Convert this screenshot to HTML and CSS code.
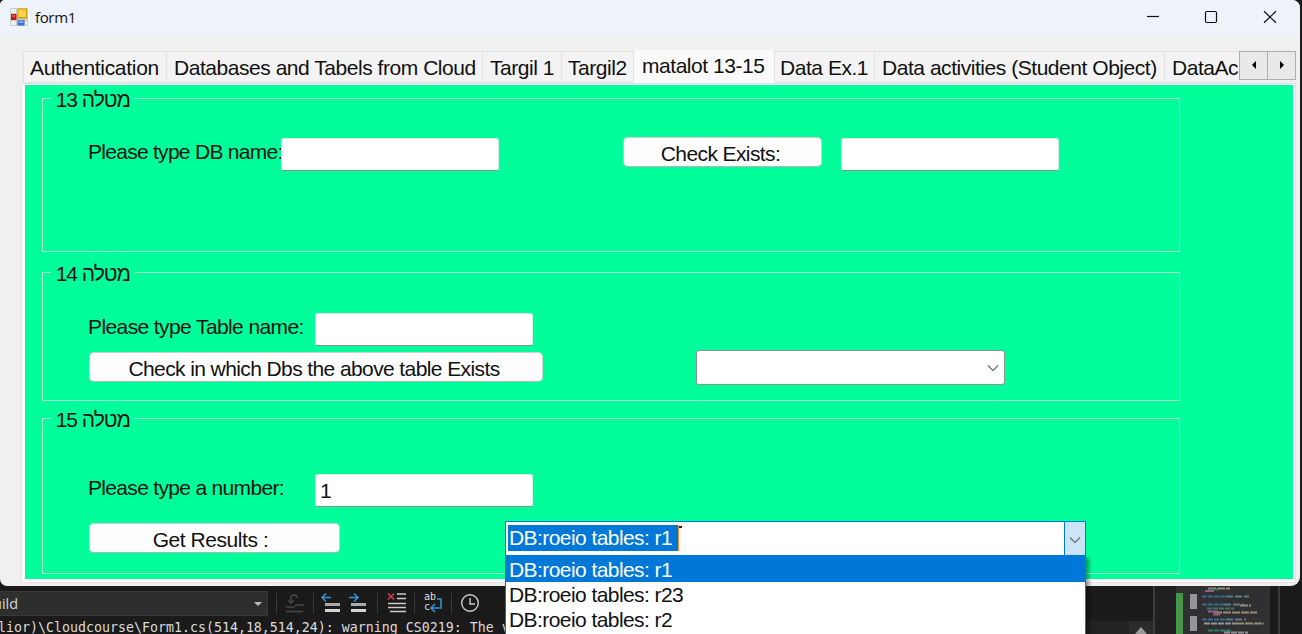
FILE: index.html
```html
<!DOCTYPE html>
<html lang="en">
<head>
<meta charset="utf-8">
<title>form1</title>
<link rel="stylesheet" href="styles.css">
</head>
<body>
<main class="desktop">
  <section class="window">
    <header class="titlebar">
      <svg class="app-icon" width="18" height="18" viewBox="0 0 18 18">
        <rect width="18" height="18" rx="1" fill="#c9ccd1"/>
        <path d="M1 1h5v4H1zM1 13h5v4H1zM15 13h2v4h-2z" fill="#eef0f3"/>
        <rect x="1" y="6" width="5.5" height="6" fill="#b51f18"/><rect x="2" y="7" width="3" height="2" fill="#df5a4d"/>
        <rect x="7.5" y="0.5" width="9.5" height="10" fill="#d49a00"/><rect x="8.5" y="1.5" width="7.5" height="7.5" fill="#fbd347"/>
        <rect x="7.5" y="12" width="7" height="5.5" fill="#3f6fd0"/><rect x="8.5" y="12.5" width="5" height="2.5" fill="#79a5f0"/>
      </svg>
      <h1 class="title">form1</h1>
      <svg class="controls" width="132" height="14" viewBox="0 0 132 14" fill="none" stroke="#111" stroke-width="1.2">
        <path d="M0 6.5h12"/>
        <rect x="58.5" y="1.5" width="11" height="11" rx="1.2"/>
        <path d="M117 1.2l12 11.6M129 1.2l-12 11.6"/>
      </svg>
    </header>

    <div class="tabbar">
      <nav class="tabs">
        <span class="tab t1">Authentication</span>
        <span class="tab t2">Databases and Tabels from Cloud</span>
        <span class="tab t3">Targil 1</span>
        <span class="tab t4">Targil2</span>
        <span class="tab t5 selected">matalot 13-15</span>
        <span class="tab t6">Data Ex.1</span>
        <span class="tab t7">Data activities (Student Object)</span>
        <span class="tab t8">DataAc</span>
      </nav>
      <div class="spin">
        <button class="spin-btn"><svg width="4" height="8" viewBox="0 0 4 8"><path d="M4 0v8L0 4z"/></svg></button>
        <button class="spin-btn"><svg width="4" height="8" viewBox="0 0 4 8"><path d="M0 0v8L4 4z"/></svg></button>
      </div>
    </div>

    <div class="page">
      <fieldset class="group g13">
        <legend dir="rtl">מטלה 13</legend>
        <div class="row">
          <span class="label l-db">Please type DB name:</span>
          <span class="input"></span>
          <button class="btn check">Check Exists:</button>
          <span class="input"></span>
        </div>
      </fieldset>
      <fieldset class="group g14">
        <legend dir="rtl">מטלה 14</legend>
        <div class="row">
          <span class="label">Please type Table name:</span>
          <span class="input"></span>
        </div>
        <div class="row second">
          <button class="btn which">Check in which Dbs the above table Exists</button>
          <span class="combo"><svg width="12" height="8" viewBox="0 0 12 8"><path d="M1 1.5l5 5 5-5"/></svg></span>
        </div>
      </fieldset>
      <fieldset class="group g15">
        <legend dir="rtl">מטלה 15</legend>
        <div class="row">
          <span class="label l-num">Please type a number:</span>
          <span class="input">1</span>
        </div>
        <div class="row third">
          <button class="btn results">Get Results :</button>
          <div class="combo-open">
            <span class="value">DB:roeio tables: r1</span>
            <span class="mark"></span>
            <span class="drop"><svg width="12" height="8" viewBox="0 0 12 8"><path d="M1 1.5l5 5 5-5"/></svg></span>
            <ul class="list">
              <li class="active">DB:roeio tables: r1</li>
              <li>DB:roeio tables: r23</li>
              <li>DB:roeio tables: r2</li>
            </ul>
          </div>
        </div>
      </fieldset>
    </div>
  </section>

  <section class="ide">
    <div class="output">
      <div class="toolbar">
        <span class="source">uild<i class="caret"></i></span>
        <svg class="tools" width="236" height="24" viewBox="0 0 236 24" fill="none">
          <path d="M8.500 1v21M45.500 1v21M109.500 1v21M146.500 1v21M183.500 1v21" stroke="#3a3a3a"/>
          <g stroke="#484848" stroke-width="1.4"><path d="M20 8l3 3 3-3M23 11V6q0-3 3-3t3 3M18 15h9M27 13h9M18 19.500h17"/></g>
          <path d="M63 5.500h-9M58 1.500l-4 4 4 4M81 5.500h9M86 1.500l4 4-4 4" stroke="#3b94d9" stroke-width="1.4"/>
          <path d="M57 12.500h15M83 12.500h15" stroke="#aaa" stroke-width="3"/><path d="M57 18.500h15M83 18.500h15" stroke="#d5d5d5" stroke-width="3"/>
          <path d="M120 1.500l6 6M126 1.500l-6 6" stroke="#d9404c" stroke-width="1.5"/>
          <path d="M129 2h9M129 6.500h9M120 11.500h18M120 15.500h18M122 19.500h16" stroke="#ccc" stroke-width="1.4"/>
          <text x="156" y="8" class="wrap">ab</text><text x="156" y="18" class="wrap">c</text>
          <path d="M169 7h4v9h-10M167 12l-4 4 4 4" stroke="#3b94d9" stroke-width="1.5"/>
          <circle cx="202" cy="11" r="8.300" stroke="#ccc" stroke-width="1.4"/><path d="M202 6v6h5" stroke="#ccc" stroke-width="1.4"/>
        </svg>
      </div>
      <pre class="log">lior)\Cloudcourse\Form1.cs(514,18,514,24): warning CS0219: The v</pre>
    </div>
    <svg class="editor" width="216" height="48" viewBox="0 0 216 48">
      <rect width="216" height="48" fill="#1b1b1b"/>
      <path d="M0 35h43v13H0z" fill="#222"/><path d="M43 35h24v13H43z" fill="#2b2b2b"/>
      <path d="M49 48l6-7 6 7z" fill="#999"/>
      <path d="M68 0v48M193 0v48" stroke="#3b3b3d" stroke-width="2"/>
      <path d="M69 0h21v48H69z" fill="#202020"/>
      <path d="M90 0h94v48H90z" fill="#303033"/>
      <path d="M90 7h7v41H90z" fill="#46964a"/>
      <path d="M104 8h7v15h-7zM104 30h7v15h-7z" fill="#969696"/>
      <g stroke-width="2" opacity=".7">
        <path d="M116 10.500h24M116 18.500h22M116 33.500h24" stroke="#4384ae" stroke-dasharray="5 1"/>
        <path d="M140 10.500h23M138 18.500h20M140 33.500h20" stroke="#6f9eaa" stroke-dasharray="7 2"/>
        <path d="M122 2.500h22M154 19.500h11M128 26.500h43M150 37.500h28" stroke="#c0b78c" stroke-dasharray="8 1"/>
        <path d="M124 3.500h8M121 22.500h27M122 44.500h24" stroke="#389c7c" stroke-dasharray="5 1"/>
        <path d="M119 5h9M122 25.500h10M127 28.500h7" stroke="#c06fb2"/>
        <path d="M118 37.500h32M138 46.500h24" stroke="#bbc1c5" stroke-dasharray="6 1"/>
      </g>
    </svg>
  </section>
</main>
</body>
</html>
```
FILE: styles.css
```css
* { box-sizing: border-box; }
body { margin: 0; overflow: hidden; background: #1a1a1a; font-family: "Liberation Sans", Arial, sans-serif; font-size: 21px; letter-spacing: -.6px; color: #111; }
button { font: inherit; color: inherit; padding: 0; letter-spacing: inherit; }
.desktop { width: 1302px; height: 634px; overflow: hidden; display: flex; flex-direction: column; }
.window { position: relative; z-index: 1; width: 1300px; height: 586px; flex: none; background: #f0f0f0; border-radius: 5px 8px 9px 7px; }
.titlebar { display: flex; height: 36px; padding: 0 22px 2px 10px; align-items: center; background: #eef3f9; border-radius: 5px 8px 0 0; }
.title { margin: 0 auto 0 7px; font: 400 15px "Open Sans", sans-serif; letter-spacing: -.35px; }
.controls { margin-right: -1px; }

.tabbar { display: flex; height: 49px; padding: 14px 4px 0 23px; }
.tabs { display: flex; width: 1216px; height: 35px; overflow: hidden; align-items: flex-start; flex: none; letter-spacing: -.46px; }
.tab { flex: none; height: 32px; margin-top: 1px; padding-left: 6px; border: 1px solid #e2e2e2; border-right: 0; background: #f3f3f3; line-height: 31px; white-space: nowrap; }
.tab.selected { height: 35px; margin-top: -1px; padding-left: 8px; background: #fafafa; line-height: 31px; border-right: 1px solid #e2e2e2; border-bottom: 0; }
.t1 { width: 143px; letter-spacing: -.3px; } .t2 { width: 316px; padding-left: 7px; } .t3 { width: 79px; padding-left: 7px; } .t4 { width: 72px; }
.t5 { width: 142px; } .t6 { width: 99px; padding-left: 5px; border-left: 0; } .t7 { width: 290px; padding-left: 7px; } .t8 { width: 90px; padding-left: 7px; }
.spin { display: flex; height: 29px; margin-top: 1px; }
.spin-btn { width: 29px; height: 29px; border: 1px solid #adadad; background: #e9e9e9; display: flex; align-items: center; justify-content: center; padding-bottom: 2px; }
.spin-btn + .spin-btn { margin-left: -1px; }

.page { height: 498px; margin: -1px 5px 0 22px; padding: 13px 0 0 17px; border: 3px solid #fff; border-width: 1px 2px 3px 3px; background: #00fe9b; outline: 1px solid #e3e3e3; }
.group { position: relative; width: 1138px; min-width: 0; margin: 0; padding: 0 0 0 45px; border: 1px solid #a7e8cc; }
legend { height: 1px; margin-left: -37px; width: 84px; padding: 0 5px; line-height: 3px; white-space: nowrap; letter-spacing: -1px; }
.g13 { height: 154px; } .g14 { height: 129px; margin-top: 20px; } .g15 { height: 156px; margin-top: 17px; }
.row { display: flex; align-items: flex-start; white-space: nowrap; }
.label { width: 227px; height: 27px; line-height: 27px; }
.g13 .row { padding-top: 39px; } .g14 .row { padding-top: 40px; } .g15 .row { padding-top: 55px; }
.label.l-db { width: 193px; letter-spacing: -.72px; }
.label.l-num { letter-spacing: -.68px; }
.input { width: 218px; height: 33px; flex: none; padding-left: 4px; border: 1px solid #dcebe4; border-bottom-color: #7d9a8e; border-radius: 3px; background: #fff; line-height: 32px; }
.btn { flex: none; height: 30px; border: 1px solid #d0d0d0; border-bottom-color: #b5b5b5; border-radius: 5px; background: #fdfdfd; line-height: 31px; white-space: nowrap; }
.check { width: 199px; margin: -1px 19px 0 124px; padding-right: 4px; }
.g14 .second { padding-top: 3px; } .g15 .third { padding-top: 14px; }
.which { width: 454px; margin: 3px 0 0 1px; padding-right: 4px; }
.combo { width: 309px; height: 35px; margin: 1px 0 0 153px; padding-right: 5px; display: flex; align-items: center; justify-content: flex-end; border: 1px solid #8c9690; border-radius: 3px; background: #fff; }
.combo path, .drop path { fill: none; stroke: #777; stroke-width: 1.4; }
.results { width: 251px; margin: 2px 0 0 1px; padding-right: 8px; letter-spacing: -.45px; }
.combo-open { position: relative; display: flex; width: 581px; height: 35px; margin-left: 165px; border: 1px solid #0078d7; background: #fff; align-items: flex-start; letter-spacing: -.57px; }
.value { width: 171px; height: 26px; margin: 3px 0 0 2px; padding-left: 1px; background: #0078d7; border-right: 1px solid #ff8728; color: #fff; line-height: 26px; }
.mark { width: 3px; height: 2px; margin-top: 4px; background: #222; }
.drop { width: 21px; height: 33px; margin-left: auto; display: flex; align-items: center; justify-content: center; padding-top: 3px; border-left: 1px solid #0078d7; background: #cce4f7; }
.list { position: absolute; left: -1px; top: 33px; width: 581px; height: 80px; margin: 0; padding: 1px 0 0; border: 1px solid #0078d7; background: #fff; list-style: none; box-shadow: 3px 3px 4px #0006; }
.list li { height: 25px; padding-left: 3px; line-height: 25px; }
.list .active { height: 26px; margin-top: -1px; padding-top: 1px; background: #0078d7; color: #fff; }

.ide { display: flex; height: 48px; justify-content: space-between; letter-spacing: 0; }
.output { width: 1086px; padding-top: 5px; }
.toolbar { display: flex; height: 25px; gap: 0; }
.source { display: flex; width: 268px; height: 25px; align-items: center; justify-content: space-between; margin-left: 0; padding-right: 5px; border: 1px solid #383838; border-left: 0; background: #2e2e2e; color: #d6d6d6; font: 14.500px "Open Sans", sans-serif; text-indent: -7px; overflow: hidden; }
.caret { border: 4px solid transparent; border-top-color: #bbb; border-bottom: 0; }
.tools { margin-top: 1px; }
.wrap { fill: #ddd; font: 10px "DejaVu Sans Mono", monospace; }
.log { margin: 2px 0 0 -2px; color: #dcdcdc; font: 13.290px/19px "DejaVu Sans Mono", monospace; }
```
